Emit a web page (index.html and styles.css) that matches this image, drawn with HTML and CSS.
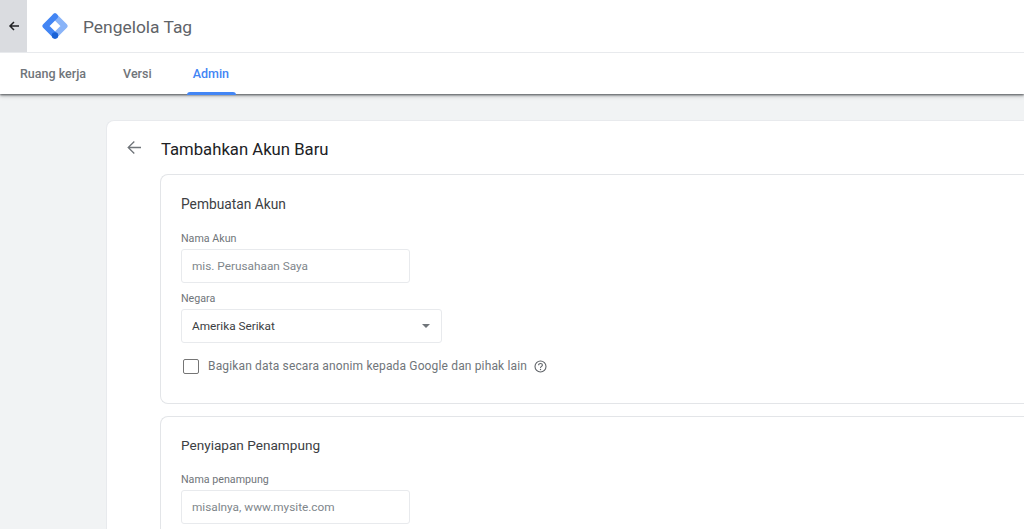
FILE: index.html
```html
<!DOCTYPE html>
<html lang="en">
<head>
  <meta charset="UTF-8">
  <title>Pengelola Tag</title>
  <link rel="stylesheet" href="styles.css">
</head>
<body>
  <header class="top-bar">
    <div class="app-bar">
      <div class="back-btn">
        <svg width="12" height="12" viewBox="0 0 12 12"><path d="M11 6H2.500M6 2L2 6l4 4" fill="none" stroke="#202124" stroke-width="1.500"/></svg>
      </div>
      <svg class="logo" width="26" height="26" viewBox="0 0 26 26">
        <path d="M13 3.500L22.500 13 13 22.500" fill="none" stroke="#8ab4f8" stroke-width="6" stroke-linecap="round" stroke-linejoin="round"/>
        <path d="M13 22.500L3.500 13 13 3.500" fill="none" stroke="#4285f4" stroke-width="6" stroke-linecap="round" stroke-linejoin="round"/>
        <circle cx="13" cy="22.500" r="3.200" fill="#1a62d6"/>
      </svg>
      <span class="app-title">Pengelola Tag</span>
    </div>
    <nav class="tabs">
      <span class="tab">Ruang kerja</span>
      <span class="tab">Versi</span>
      <span class="tab active">Admin</span>
    </nav>
  </header>

  <main class="content">
    <div class="card">
      <div class="card-head">
        <svg class="head-back" width="16" height="16" viewBox="0 0 16 16"><path d="M15 7.500H2.800M8.300 1.500L2.200 7.500l6.100 6" fill="none" stroke="#70757a" stroke-width="1.300"/></svg>
        <h1>Tambahkan Akun Baru</h1>
      </div>

      <section class="panel first">
        <h2>Pembuatan Akun</h2>
        <div class="label">Nama Akun</div>
        <div class="input placeholder">mis. Perusahaan Saya</div>
        <div class="label second">Negara</div>
        <div class="select">
          <span>Amerika Serikat</span>
          <span class="caret"></span>
        </div>
        <div class="check-row">
          <span class="checkbox"></span>
          <span class="check-text">Bagikan data secara anonim kepada Google dan pihak lain</span>
          <svg class="help" width="13" height="13" viewBox="0 0 13 13">
            <circle cx="6.500" cy="6.500" r="5.500" fill="none" stroke="#5f6368" stroke-width="1.100"/>
            <path d="M4.600 5.200C4.600 4.100 5.400 3.500 6.500 3.500s1.900.7 1.900 1.600C8.400 6.400 6.500 6.500 6.500 8" fill="none" stroke="#5f6368" stroke-width="1.100"/>
            <circle cx="6.500" cy="9.500" r=".7" fill="#5f6368"/>
          </svg>
        </div>
      </section>

      <section class="panel last">
        <h2 class="tight">Penyiapan Penampung</h2>
        <div class="label">Nama penampung</div>
        <div class="input placeholder">misalnya, www.mysite.com</div>
      </section>
    </div>
  </main>
</body>
</html>
```

FILE: styles.css
```css
/* Page */
html, body {
  margin: 0;
  height: 529px;
  overflow: hidden;
}

body {
  font-family: Roboto, Arial, sans-serif;
  background-color: #f1f3f4;
  color: #3c4043;
}

/* Top bar */
.top-bar {
  background: #fff;
  height: 94px;
  box-shadow: 0 1px 2px rgba(60, 64, 67, 0.8), 0 2px 4px rgba(60, 64, 67, 0.3);
}

.app-bar {
  display: flex;
  align-items: center;
  height: 52px;
  border-bottom: 1px solid #e8eaed;
}

.back-btn {
  display: flex;
  align-items: center;
  justify-content: center;
  width: 27px;
  height: 100%;
  background: #dadce0;
}

.logo {
  margin-left: 15px;
}

.app-title {
  margin: 2px 0 0 15px;
  font-size: 17.400px;
  color: #5f6368;
}

.tabs {
  display: flex;
  height: 41px;
  padding-left: 20px;
}

.tab {
  position: relative;
  margin-right: 37px;
  font-size: 12.500px;
  font-weight: 500;
  line-height: 41px;
  color: #70757a;
}

.tab.active {
  margin-left: 4px;
  color: #4285f4;
}

.tab.active::after {
  content: "";
  position: absolute;
  left: -6px;
  right: -7px;
  bottom: -1px;
  height: 3px;
  border-radius: 3px 3px 0 0;
  background: #4285f4;
}

/* Main card */
.content {
  padding: 26px 0 0 106px;
}

.card {
  background: #fff;
  border: 1px solid #e8eaed;
  border-right: 0;
  border-bottom: 0;
  border-radius: 8px 0 0 0;
  padding-left: 53px;
  height: 408px;
  overflow: hidden;
}

.card-head {
  display: flex;
  align-items: center;
  height: 53px;
}

.head-back {
  margin-left: -34px;
}

h1 {
  margin: 4px 0 0 19px;
  font-size: 16.700px;
  font-weight: 400;
  color: #202124;
}

/* Panels */
.panel {
  border: 1px solid #e3e5e8;
  border-right: 0;
  border-radius: 8px 0 0 8px;
  padding: 20px 0 0 20px;
  margin-bottom: 12px;
}

.panel.first {
  height: 208px;
}

.panel.last {
  height: 200px;
  padding-top: 19px;
}

h2 {
  margin: 0;
  font-size: 13.750px;
  font-weight: 400;
  line-height: 18px;
  color: #3c4043;
}

h2.tight {
  font-size: 13.600px;
}

.label {
  margin-top: 19px;
  font-size: 10.700px;
  line-height: 13px;
  color: #70757a;
}

.label.second {
  margin-top: 9px;
}

.input, .select {
  box-sizing: border-box;
  display: flex;
  align-items: center;
  height: 34px;
  margin-top: 4px;
  padding-left: 10px;
  border: 1px solid #e8eaed;
  border-radius: 3px;
  font-size: 11.800px;
}

.input {
  width: 229px;
}

.placeholder {
  color: #80868b;
}

.select {
  justify-content: space-between;
  width: 261px;
  padding-right: 11px;
  color: #3c4043;
}

.caret {
  width: 0;
  height: 0;
  border-left: 4.500px solid transparent;
  border-right: 4.500px solid transparent;
  border-top: 4.500px solid #70757a;
}

.check-row {
  display: flex;
  align-items: center;
  margin-top: 14px;
  padding-left: 2px;
  height: 18px;
}

.checkbox {
  box-sizing: border-box;
  width: 16px;
  height: 15px;
  border: 1.500px solid #757575;
  border-radius: 2px;
}

.check-text {
  margin-left: 9px;
  font-size: 12px;
  letter-spacing: 0.150px;
  color: #70757a;
}

.help {
  margin-left: 7px;
}
```
